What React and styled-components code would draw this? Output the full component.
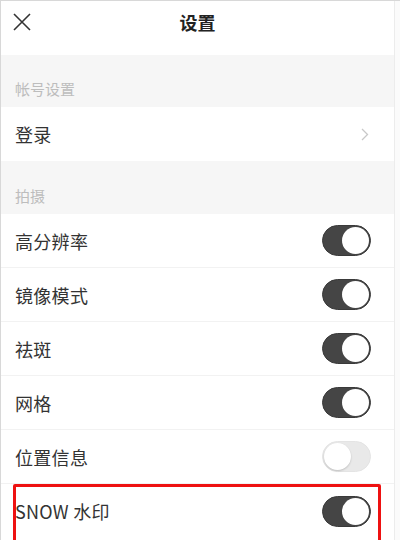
import React from 'react';
import styled, { createGlobalStyle } from 'styled-components';

const GlobalStyle = createGlobalStyle`
  html, body {
    margin: 0;
    padding: 0;
    background: #fff;
  }
  body {
    font-family: "Noto Sans CJK SC", "Noto Sans", sans-serif;
  }
`;

const Frame = styled.div`
  width: 400px;
  height: 540px;
  box-sizing: border-box;
  border-top: 1px solid #d8d8d8;
  border-left: 1px solid #d8d8d8;
  padding-right: 5px;
  background: #fbfbfb;
  overflow: hidden;
`;

const Screen = styled.div`
  height: 100%;
  background: #fff;
  border-right: 1px solid #ececec;
  display: flex;
  flex-direction: column;
`;

const Header = styled.header`
  height: 54px;
  flex: none;
  display: grid;
  grid-template-columns: 60px 1fr 60px;
  align-items: center;
  background: #fff;
`;

const CloseButton = styled.button`
  border: 0;
  background: none;
  padding: 0 0 0 11px;
  height: 100%;
  display: flex;
  align-items: center;
  margin-top: -12px;
`;

const Title = styled.h1`
  margin: 0;
  margin-top: -12px;
  text-align: center;
  font-size: 18px;
  font-weight: 700;
  color: #222;
`;

const SectionLabel = styled.div`
  height: ${p => p.$h}px;
  flex: none;
  box-sizing: border-box;
  background: #f6f6f6;
  display: flex;
  align-items: flex-end;
  padding: 0 0 8px 14px;
  font-size: 15px;
  color: #bdbdbd;
`;

const Row = styled.div`
  position: relative;
  height: 54px;
  flex: none;
  box-sizing: border-box;
  display: flex;
  align-items: center;
  justify-content: space-between;
  padding: 0 23px 0 14px;
  border-bottom: ${p => (p.$last ? 'none' : '1px solid #f2f2f2')};
  background: #fff;
`;

const Label = styled.span`
  font-size: 18px;
  color: #333;
  letter-spacing: 0.3px;
`;

const Chevron = styled.svg`
  margin-right: 2px;
`;

const Toggle = styled.span`
  width: 49px;
  height: 31px;
  box-sizing: border-box;
  border-radius: 16px;
  display: flex;
  align-items: center;
  justify-content: ${p => (p.$on ? 'flex-end' : 'flex-start')};
  padding: 1px;
  background: ${p => (p.$on ? '#454545' : '#e9e9e9')};
  border: 1px solid ${p => (p.$on ? '#3a3a3a' : '#e4e4e4')};
`;

const Knob = styled.span`
  width: 27px;
  height: 27px;
  border-radius: 50%;
  background: #fff;
  box-shadow: ${p => (p.$on ? 'none' : '0 1px 2px rgba(0,0,0,0.18)')};
`;

const Highlight = styled.span`
  position: absolute;
  left: 12px;
  right: 13px;
  top: 0;
  bottom: -10px;
  border: 3px solid #ee1111;
  border-radius: 2px;
  pointer-events: none;
`;

const toggles = [
  { label: '高分辨率', on: true },
  { label: '镜像模式', on: true },
  { label: '祛斑', on: true },
  { label: '网格', on: true },
  { label: '位置信息', on: false },
];

function Switch({ on }) {
  return (
    <Toggle $on={on}>
      <Knob $on={on} />
    </Toggle>
  );
}

export default function App() {
  return (
    <>
      <GlobalStyle />
      <Frame>
        <Screen>
          <Header>
            <CloseButton aria-label="close">
              <svg width="20" height="20" viewBox="0 0 20 20">
                <path d="M2 2 L18 18 M18 2 L2 18" stroke="#333" strokeWidth="1.6" fill="none" />
              </svg>
            </CloseButton>
            <Title>设置</Title>
            <span />
          </Header>

          <SectionLabel $h={52}>帐号设置</SectionLabel>
          <Row $last>
            <Label>登录</Label>
            <Chevron width="8" height="13" viewBox="0 0 8 13">
              <path d="M1 1 L6.5 6.5 L1 12" stroke="#c8c8c8" strokeWidth="1.3" fill="none" />
            </Chevron>
          </Row>

          <SectionLabel $h={53}>拍摄</SectionLabel>
          {toggles.map(t => (
            <Row key={t.label}>
              <Label>{t.label}</Label>
              <Switch on={t.on} />
            </Row>
          ))}
          <Row $last>
            <Label>SNOW 水印</Label>
            <Switch on />
            <Highlight />
          </Row>
        </Screen>
      </Frame>
    </>
  );
}
